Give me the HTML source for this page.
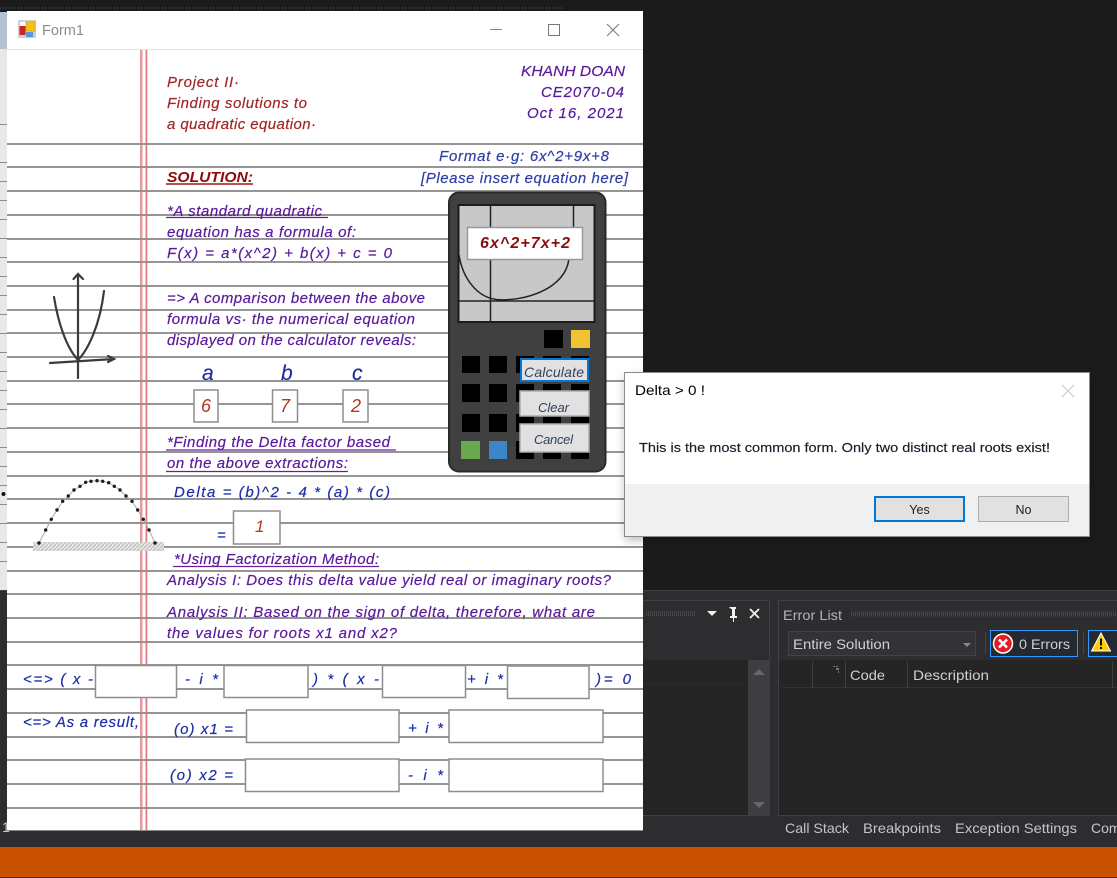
<!DOCTYPE html>
<html><head><meta charset="utf-8"><title>Form1</title>
<style>
html,body{margin:0;padding:0;background:#1b1b1c;overflow:hidden}
svg{display:block}
.h{font-family:"Liberation Sans",sans-serif;font-style:italic;font-size:15px}
.u{font-family:"Liberation Sans",sans-serif}
.r{fill:#a02828;stroke:#a02828;stroke-width:.2px}.p{fill:#5a1a9c;stroke:#5a1a9c;stroke-width:.2px}.b{fill:#2f3fa5;stroke:#2f3fa5;stroke-width:.2px}.d{fill:#1f2fa8;stroke:#1f2fa8;stroke-width:.2px}
.box{fill:#fff;stroke:#8e8e8e;stroke-width:2}
.k{fill:#000}
.vs{fill:#d0d0d0;font-size:14px}
.tab{fill:#c0c6cf;font-size:14px}
</style></head><body>
<svg width="1117" height="878" viewBox="0 0 1117 878" xmlns="http://www.w3.org/2000/svg">
<defs>
<filter id="sh" x="-5%" y="-10%" width="110%" height="120%"><feGaussianBlur stdDeviation="5"/></filter>
<filter id="soft" x="0" y="0" width="100%" height="100%"><feGaussianBlur stdDeviation="0.35"/></filter>
<pattern id="hatch" width="4" height="4" patternUnits="userSpaceOnUse"><rect width="4" height="4" fill="#e4e4e4"/><path d="M0 4L4 0" stroke="#bbb" stroke-width="1"/></pattern>
</defs>
<!-- backdrop -->
<rect width="1117" height="878" fill="#1b1b1c"/>
<line x1="0" y1="8" x2="562" y2="8" stroke="#666" stroke-width="1" stroke-dasharray="1 2"/>
<rect x="0" y="12" width="7" height="37" fill="#b4c3d2"/>
<rect x="0" y="49" width="7" height="541" fill="#e8e8e8"/>
<g stroke="#8a8a8a" stroke-width="1">
<path d="M0 124.500H7M0 162.500H7M0 181.500H7M0 200.500H7M0 219.500H7M0 238.500H7M0 257.500H7M0 276.500H7M0 295.500H7M0 314.500H7M0 333.500H7M0 352.500H7M0 371.500H7M0 390.500H7M0 409.500H7M0 428.500H7M0 447.500H7M0 466.500H7M0 485.500H7M0 504.500H7M0 523.500H7M0 542.500H7M0 561.500H7"/>
</g>
<circle cx="3.500" cy="494" r="2" fill="#111"/>
<!-- VS lower area -->
<rect x="0" y="590" width="1117" height="258" fill="#2d2d30"/>
<rect x="0" y="590" width="1117" height="1" fill="#3f3f46"/>
<rect x="0" y="847" width="1117" height="30" fill="#ca5100"/>
<rect x="0" y="877" width="1117" height="1" fill="#333"/>
<text x="2" y="832" class="u" font-size="14" fill="#c8c8c8">1</text>
<!-- left panel -->
<rect x="620" y="600.500" width="149.500" height="215" fill="#2d2d30" stroke="#3f3f46"/>
<rect x="620" y="660" width="128" height="155" fill="#252526"/>
<line x1="620" y1="684.500" x2="748" y2="684.500" stroke="#2d2d30"/>
<rect x="748" y="660" width="22" height="155" fill="#3e3e42"/>
<path d="M753 675l6-6 6 6zM753 802l6 6 6-6z" fill="#686868"/>
<line x1="646" y1="613.500" x2="696" y2="613.500" stroke="#46464a" stroke-width="5" stroke-dasharray="1 1"/>
<path d="M707 611h10l-5 5z" fill="#f0f0f0"/>
<path d="M729 607h7v2h-1v7h2v2h-3v4h-1v-4h-3v-2h2v-7h-1z" fill="#f0f0f0"/>
<path d="M750 609l9 9M759 609l-9 9" stroke="#f0f0f0" stroke-width="1.800" fill="none"/>
<!-- right panel -->
<rect x="778.500" y="600.500" width="345" height="215" fill="#2d2d30" stroke="#3f3f46"/>
<rect x="779" y="660" width="338" height="155" fill="#252526"/>
<line x1="782" y1="687.500" x2="1117" y2="687.500" stroke="#333337"/>
<text x="783" y="620" class="u" font-size="14" fill="#b0b4bb" textLength="59" lengthAdjust="spacingAndGlyphs">Error List</text>
<line x1="851" y1="614" x2="1117" y2="614" stroke="#46464a" stroke-width="5" stroke-dasharray="1 1"/>
<rect x="788.500" y="631.500" width="187" height="24" fill="#333337" stroke="#434346"/>
<text x="793" y="649" class="u vs" textLength="97" lengthAdjust="spacingAndGlyphs">Entire Solution</text>
<path d="M963 643h8l-4 4z" fill="#8a8a8a"/>
<line x1="985.500" y1="632" x2="985.500" y2="654" stroke="#46464a"/>
<rect x="990.500" y="630.500" width="87" height="26" fill="#252a30" stroke="#3399ff"/>
<circle cx="1003" cy="643.500" r="9.500" fill="#e51c23" stroke="#fff" stroke-width="1.500"/>
<path d="M999 639.500l8 8M1007 639.500l-8 8" stroke="#fff" stroke-width="2.600" fill="none"/>
<text x="1019" y="649" class="u vs" textLength="51" lengthAdjust="spacingAndGlyphs">0 Errors</text>
<line x1="1083.500" y1="632" x2="1083.500" y2="654" stroke="#46464a"/>
<rect x="1088.500" y="630.500" width="40" height="26" fill="#252a30" stroke="#3399ff"/>
<path d="M1101 633l9.500 18h-19z" fill="#ffcc00" stroke="#fff" stroke-width="1"/>
<path d="M1101 638.500v7M1101 647v2" stroke="#111" stroke-width="2" fill="none"/>
<g stroke="#3f3f46"><path d="M812.500 661v27M845.500 661v27M907.500 661v27M1112.500 661v27"/></g>
<path d="M833 666h2v1h-2zM836 666h2v1h-2zM836 668h3v2h-3zM838 671h1v2h-1z" fill="#777"/>
<text x="850" y="680" class="u vs" textLength="35" lengthAdjust="spacingAndGlyphs">Code</text>
<text x="913" y="680" class="u vs" textLength="76" lengthAdjust="spacingAndGlyphs">Description</text>
<text x="785" y="833" class="u tab" textLength="64" lengthAdjust="spacingAndGlyphs">Call Stack</text>
<text x="863" y="833" class="u tab" textLength="78" lengthAdjust="spacingAndGlyphs">Breakpoints</text>
<text x="955" y="833" class="u tab" textLength="122" lengthAdjust="spacingAndGlyphs">Exception Settings</text>
<text x="1091" y="833" class="u tab">Command</text>
<!-- form -->
<rect x="7" y="11" width="636" height="820" fill="#fff"/>
<rect x="7" y="830" width="636" height="1" fill="#8a8a8a"/>
<rect x="7" y="49" width="636" height="1" fill="#e3e3e3"/>
<rect x="18" y="20" width="18" height="18" fill="#cfcfcf"/>
<rect x="20" y="22" width="6" height="5" fill="#fff"/>
<rect x="26" y="22" width="9" height="9" fill="#f2c218" stroke="#c99a10" stroke-width=".6"/>
<rect x="19.500" y="26" width="6" height="9" fill="#c4262a"/>
<rect x="26" y="32" width="7" height="5" fill="#5b94e0"/>
<text x="42" y="35" class="u" font-size="14.500" fill="#8c8c8c" textLength="42" lengthAdjust="spacingAndGlyphs">Form1</text>
<path d="M490 29.500h12" stroke="#8a8a8a" stroke-width="1" fill="none"/>
<rect x="548.500" y="24.500" width="11" height="11" fill="none" stroke="#777"/>
<path d="M607 24l12 12M619 24l-12 12" stroke="#777" stroke-width="1" fill="none"/>
<g filter="url(#soft)">
<!-- margin -->
<rect x="140" y="50" width="2.500" height="780" fill="#e8979c"/>
<rect x="145.500" y="50" width="1.800" height="780" fill="#e27a82"/>
<!-- ruled lines -->
<g fill="#8f8f8f" fill-opacity=".95">
<rect x="7" y="143" width="636" height="2"/><rect x="7" y="166" width="636" height="2"/><rect x="7" y="190" width="636" height="2"/><rect x="7" y="214" width="636" height="2"/><rect x="7" y="238" width="636" height="2"/><rect x="7" y="261" width="636" height="2"/><rect x="7" y="285" width="636" height="2"/><rect x="7" y="309" width="636" height="2"/><rect x="7" y="332" width="636" height="2"/><rect x="7" y="356" width="636" height="2"/><rect x="7" y="380" width="636" height="2"/><rect x="7" y="403" width="636" height="2"/><rect x="7" y="427" width="636" height="2"/><rect x="7" y="451" width="636" height="2"/><rect x="7" y="475" width="636" height="2"/><rect x="7" y="498" width="636" height="2"/><rect x="7" y="522" width="636" height="2"/><rect x="7" y="546" width="636" height="2"/><rect x="7" y="570" width="636" height="2"/><rect x="7" y="593" width="636" height="2"/><rect x="7" y="617" width="636" height="2"/><rect x="7" y="641" width="636" height="2"/><rect x="7" y="664" width="636" height="2"/><rect x="7" y="688" width="636" height="2"/><rect x="7" y="712" width="636" height="2"/><rect x="7" y="736" width="636" height="2"/><rect x="7" y="759" width="636" height="2"/><rect x="7" y="783" width="636" height="2"/><rect x="7" y="807" width="636" height="2"/>
</g>
<!-- parabola icon -->
<g fill="none" stroke="#3a3a3a" stroke-width="2.200" stroke-linecap="round">
<path d="M54 297C58 322 66 347 78 360C88 350 100 325 104 291"/>
<path d="M78 274V378M73.500 279l4.500-5 5 5"/>
<path d="M50 363L114 359M108 356l6 3-6 3"/>
</g>
<!-- dotted arc -->
<rect x="33" y="542" width="131" height="9" fill="url(#hatch)"/>
<polyline points="39,543 45.700,530 51.300,519.300 57,510 62.700,501.300 68.300,496 74,490 80,486.300 85.700,482.300 91,481.300 97,480.700 102.700,481.300 108.700,482.700 114.300,486.300 120,490 126,496 132,501.300 137.700,510 143.300,519.300 149,530 155,543" fill="none" stroke="#aaa" stroke-width="1"/>
<g fill="#1c1c1c"><circle cx="39" cy="543" r="1.700"/><circle cx="45.700" cy="530" r="1.700"/><circle cx="51.300" cy="519.300" r="1.700"/><circle cx="57" cy="510" r="1.700"/><circle cx="62.700" cy="501.300" r="1.700"/><circle cx="68.300" cy="496" r="1.700"/><circle cx="74" cy="490" r="1.700"/><circle cx="80" cy="486.300" r="1.700"/><circle cx="85.700" cy="482.300" r="1.700"/><circle cx="91" cy="481.300" r="1.700"/><circle cx="97" cy="480.700" r="1.700"/><circle cx="102.700" cy="481.300" r="1.700"/><circle cx="108.700" cy="482.700" r="1.700"/><circle cx="114.300" cy="486.300" r="1.700"/><circle cx="120" cy="490" r="1.700"/><circle cx="126" cy="496" r="1.700"/><circle cx="132" cy="501.300" r="1.700"/><circle cx="137.700" cy="510" r="1.700"/><circle cx="143.300" cy="519.300" r="1.700"/><circle cx="149" cy="530" r="1.700"/><circle cx="155" cy="543" r="1.700"/></g>
<!-- header text -->
<g class="h">
<text x="167" y="87" class="r" textLength="72">Project II·</text>
<text x="167" y="108" class="r" textLength="140">Finding solutions to</text>
<text x="167" y="129" class="r" textLength="149">a quadratic equation·</text>
<text x="521" y="76" class="p" textLength="104" lengthAdjust="spacingAndGlyphs">KHANH DOAN</text>
<text x="541" y="97" class="p" textLength="83">CE2070-04</text>
<text x="527" y="118" class="p" textLength="97">Oct 16, 2021</text>
<text x="439" y="161" class="b" textLength="170">Format e·g: 6x^2+9x+8</text>
<text x="421" y="183" class="b" textLength="207">[Please insert equation here]</text>
<text x="167" y="182" fill="#8b0f0f" font-weight="bold" textLength="86" lengthAdjust="spacingAndGlyphs">SOLUTION:</text>
<text x="167" y="216" class="p" textLength="155">*A standard quadratic</text>
<text x="167" y="237" class="p" textLength="189">equation has a formula of:</text>
<text x="167" y="258" class="p" textLength="225">F(x) = a*(x^2) + b(x) + c = 0</text>
<text x="167" y="303" class="p" textLength="258">=&gt; A comparison between the above</text>
<text x="167" y="324" class="p" textLength="248">formula vs· the numerical equation</text>
<text x="167" y="345" class="p" textLength="249">displayed on the calculator reveals:</text>
<text x="202" y="380" class="d" style="font-size:21px">a</text>
<text x="281" y="380" class="d" style="font-size:21px">b</text>
<text x="352" y="380" class="d" style="font-size:21px">c</text>
<text x="167" y="447" class="p" textLength="223">*Finding the Delta factor based</text>
<text x="167" y="468" class="p" textLength="181">on the above extractions:</text>
<text x="174" y="497" class="d" textLength="216">Delta = (b)^2 - 4 * (a) * (c)</text>
<text x="217" y="540" class="d">=</text>
<text x="174" y="564" class="p" textLength="205">*Using Factorization Method:</text>
<text x="167" y="585" class="p" textLength="444">Analysis I: Does this delta value yield real or imaginary roots?</text>
<text x="167" y="617" class="p" textLength="428">Analysis II: Based on the sign of delta, therefore, what are</text>
<text x="167" y="638" class="p" textLength="230">the values for roots x1 and x2?</text>
<text x="23" y="684" class="d" textLength="70">&lt;=&gt; ( x -</text>
<text x="185" y="684" class="d" textLength="33">- i *</text>
<text x="313" y="684" class="d" textLength="66">) * ( x -</text>
<text x="467" y="684" class="d" textLength="36">+ i *</text>
<text x="596" y="684" class="d" textLength="35">)= 0</text>
<text x="23" y="727" class="d" textLength="116">&lt;=&gt; As a result,</text>
<text x="174" y="734" class="d" textLength="59">(o) x1 =</text>
<text x="408" y="733" class="d" textLength="35">+ i *</text>
<text x="170" y="780" class="d" textLength="63">(o) x2 =</text>
<text x="408" y="780" class="d" textLength="35">- i *</text>
</g>
<!-- underlines -->
<path d="M166 184h87" stroke="#a01818" stroke-width="1.500"/>
<g stroke="#6d1fa0" stroke-width="1.300">
<path d="M166 217.500h162M166 450h230M166 471.500h182M173 566.500h206"/>
</g>
<!-- input boxes -->
<rect class="box" x="194" y="390" width="24" height="32" style="stroke-width:1.500"/>
<rect class="box" x="272.500" y="390" width="25" height="32" style="stroke-width:1.500"/>
<rect class="box" x="343" y="390" width="25" height="32" style="stroke-width:1.500"/>
<rect class="box" x="233.500" y="511" width="46.500" height="33" style="stroke-width:1.500"/>
<g class="h" fill="#b0391c" style="font-size:18px">
<text x="201" y="412">6</text><text x="280" y="412">7</text><text x="351" y="412">2</text>
</g>
<text x="255" y="532" class="h" fill="#b0391c" style="font-size:17px">1</text>
<g class="box" style="stroke-width:1.500">
<rect x="95.500" y="665.500" width="81" height="32"/>
<rect x="224" y="665.500" width="84" height="32"/>
<rect x="382.500" y="665.500" width="83" height="32"/>
<rect x="507.500" y="666" width="81.500" height="32.500"/>
<rect x="246.500" y="710" width="152.500" height="32.500"/>
<rect x="449" y="710" width="154" height="32.500"/>
<rect x="245.500" y="759" width="153.500" height="32.500"/>
<rect x="449" y="759" width="154" height="32.500"/>
</g>
<!-- calculator -->
<rect x="449" y="192.500" width="156.500" height="279" rx="10" fill="#414141" stroke="#2a2a2a" stroke-width="2"/>
<rect x="458.500" y="205" width="136" height="117" fill="#c8c8c8" stroke="#1c1c1c" stroke-width="2"/>
<g fill="none" stroke="#222" stroke-width="1.500">
<path d="M490.500 205V322M573.500 205V230M459 301H594"/>
<path d="M459 255C463 280 478 297 496 299.500C522 302 566 290 569 258"/>
</g>
<rect x="467.500" y="227.500" width="115" height="32" fill="#fff" stroke="#999" stroke-width="1.500"/>
<text x="480" y="248" class="h" font-weight="bold" style="font-size:16px" fill="#8b1010" textLength="90">6x^2+7x+2</text>
<rect class="k" x="544" y="330" width="19" height="18"/>
<rect x="571" y="330" width="19" height="18" fill="#f1c232"/>
<g class="k">
<rect x="462" y="356" width="18" height="17"/><rect x="489" y="356" width="18" height="17"/><rect x="516" y="356" width="18" height="17"/><rect x="543" y="356" width="18" height="17"/><rect x="571" y="356" width="18" height="17"/>
<rect x="462" y="384" width="18" height="18"/><rect x="489" y="384" width="18" height="18"/><rect x="516" y="384" width="18" height="18"/><rect x="543" y="384" width="18" height="18"/><rect x="571" y="384" width="18" height="18"/>
<rect x="462" y="414" width="18" height="18"/><rect x="489" y="414" width="18" height="18"/><rect x="516" y="414" width="18" height="18"/><rect x="543" y="414" width="18" height="18"/><rect x="571" y="414" width="18" height="18"/>
<rect x="516" y="441" width="18" height="18"/><rect x="543" y="441" width="18" height="18"/><rect x="571" y="441" width="18" height="18"/>
</g>
<rect x="461" y="441" width="19" height="18" fill="#6aa84f"/>
<rect x="489" y="441" width="18" height="18" fill="#3d85c6"/>
<rect x="520" y="358" width="69" height="24" fill="#e6e6e6"/>
<rect x="521" y="359" width="67" height="22" fill="#e1e1e1" stroke="#0078d7" stroke-width="2"/>
<rect x="520" y="391" width="69" height="25" fill="#e1e1e1" stroke="#adadad" stroke-width="1.500"/>
<rect x="520" y="424" width="69" height="28" fill="#e1e1e1" stroke="#adadad" stroke-width="1.500"/>
<text x="524" y="377" class="h" style="font-size:14px" fill="#33415c" textLength="60">Calculate</text>
<text x="538" y="412" class="h" style="font-size:13px" fill="#33415c" textLength="31">Clear</text>
<text x="534" y="444" class="h" style="font-size:13px" fill="#33415c" textLength="39">Cancel</text>
</g>
<!-- dialog -->
<rect x="625" y="376" width="464" height="164" fill="#000" opacity=".28" filter="url(#sh)"/>
<rect x="624.500" y="372.500" width="465" height="164" fill="#fff" stroke="#8a8a8a" stroke-width="1"/>
<rect x="625" y="484" width="464" height="52" fill="#f0f0f0"/>
<text x="635" y="395" class="u" font-size="14" fill="#000" textLength="70" lengthAdjust="spacingAndGlyphs">Delta &gt; 0 !</text>
<path d="M1062 385l12 12M1074 385l-12 12" stroke="#c8c8c8" stroke-width="1" fill="none"/>
<text x="639" y="452" class="u" font-size="13" fill="#1a1a2a" stroke="#1a1a2a" stroke-width=".15" textLength="411" lengthAdjust="spacingAndGlyphs">This is the most common form. Only two distinct real roots exist!</text>
<rect x="875" y="497" width="89" height="24" fill="#e1e1e1" stroke="#0078d7" stroke-width="2"/>
<rect x="978.500" y="496.500" width="90" height="25" fill="#e1e1e1" stroke="#adadad" stroke-width="1"/>
<text x="919.500" y="514" class="u" font-size="12.500" fill="#222" text-anchor="middle">Yes</text>
<text x="1023.500" y="514" class="u" font-size="12.500" fill="#222" text-anchor="middle">No</text>
</svg>
</body></html>
